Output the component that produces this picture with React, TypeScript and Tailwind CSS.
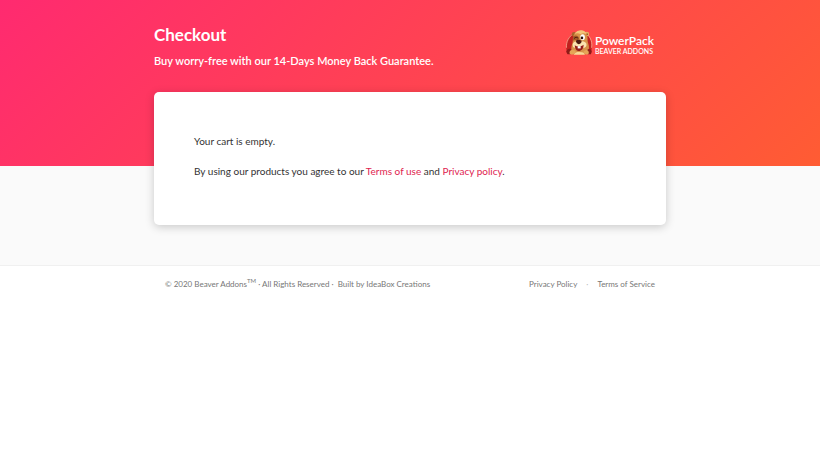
const footerLinks = [
  { label: "Privacy Policy", href: "#privacy" },
  { label: "Terms of Service", href: "#terms" },
];

function BeaverMark() {
  return (
    <svg viewBox="0 0 84 76" className="h-[25px] w-7 shrink-0" aria-hidden="true">
      <path d="M5 66 C-1 44 8 20 26 11 H62 C80 22 84 48 79 66 Z" fill="#c0211f" />
      <path d="M4 54 C2 38 11 19 26 11" fill="none" stroke="#ffc9a8" strokeWidth="2" />
      <path d="M66 12 C79 24 83 40 80 54" fill="none" stroke="#ffc9a8" strokeWidth="2" />
      <circle cx="27" cy="13" r="7" fill="#a8622b" />
      <circle cx="66" cy="12" r="7" fill="#e9ae62" />
      <circle cx="66" cy="13" r="3" fill="#8a4520" />
      <path d="M17 74 C20 62 17 52 21 43 C25 36 22 26 25 18 C30 6 39 2 48 2 C61 3 69 13 68 27 C67 38 74 45 72 56 C70 65 67 68 68 74 Z" fill="#d8924a" />
      <path d="M28 12 C34 3 43 0 51 1 C58 2 63 7 66 13 C58 9 52 9 47 13 C40 8 34 9 28 12 Z" fill="#f3c57a" />
      <path d="M24 20 C30 14 38 16 42 23 L39 32 C33 30 28 30 24 33 Z" fill="#a35a26" />
      <path d="M27 26 C31 21 36 21 40 26" fill="none" stroke="#4a1a12" strokeWidth="3" />
      <ellipse cx="53" cy="22" rx="7" ry="9" fill="#fff" />
      <circle cx="51" cy="24" r="4" fill="#2b1410" />
      <path d="M23 43 C25 34 33 33 40 37 C50 31 65 34 65 45 C65 54 56 56 50 53 C47 60 37 60 34 53 C27 56 22 52 23 43 Z" fill="#fbe3b0" />
      <path d="M32 33 C36 28 47 28 50 34 C49 41 44 43 41 43 C37 43 33 39 32 33 Z" fill="#4a1a12" />
      <path d="M29 46 C36 51 48 51 56 45 C56 58 48 65 40 64 C33 63 30 56 29 46 Z" fill="#951c19" />
      <path d="M38 49 H47 V56 H38 Z" fill="#fff" />
      <path d="M26 75 C28 68 36 67 43 67 C53 67 58 69 60 75 Z" fill="#f7d896" />
      <path d="M3 66 C6 54 17 55 20 62 C22 68 20 72 16 74 H7 Z" fill="#8f1a18" />
      <path d="M81 66 C79 55 70 56 66 62 C64 69 66 73 70 74 H78 Z" fill="#8f1a18" />
      <path d="M13 67 C17 57 28 58 32 66 C32 73 22 76 14 73 Z" fill="#e5a557" />
      <path d="M72 67 C68 57 59 60 56 67 C57 73 65 76 71 73 Z" fill="#e5a557" />
    </svg>
  );
}

function Logo() {
  return (
    <a href="#home" className="flex items-center gap-0.5 text-white">
      <BeaverMark />
      <span className="flex flex-col pt-1">
        <span className="text-[12px] leading-3 font-semibold">PowerPack</span>
        <span className="text-[7px] leading-2 font-semibold">BEAVER ADDONS</span>
      </span>
    </a>
  );
}

export default function App() {
  return (
    <div className="min-h-screen bg-white font-[Lato,'Liberation_Sans',sans-serif]">
      <div className="border-b border-[#f0f0f0] bg-[#fafafa] pb-10">
        <header className="bg-linear-[135deg] from-[#ff2a70] to-[#ff5c33] pt-5 pb-[94px]">
          <div className="mx-auto flex max-w-lg items-start justify-between">
            <div className="text-white">
              <h1 className="text-[17px] leading-[30px] font-bold">Checkout</h1>
              <p className="text-[11px] leading-[22px] font-semibold">
                Buy worry-free with our 14-Days Money Back Guarantee.
              </p>
            </div>
            <div className="pt-[10px] pr-3">
              <Logo />
            </div>
          </div>
        </header>

        <main className="relative mx-auto -mt-[74px] max-w-lg rounded-[5px] bg-white px-10 pt-10 pb-[45px] text-[10px] leading-[18px] text-[#333] shadow-[0_2px_10px_rgba(0,0,0,0.2)]">
          <p>Your cart is empty.</p>
          <p className="mt-3">
            By using our products you agree to our{" "}
            <a href="#terms" className="text-[#e0244f]">Terms of use</a> and{" "}
            <a href="#privacy" className="text-[#e0244f]">Privacy policy</a>.
          </p>
        </main>
      </div>

      <footer className="mx-auto flex max-w-lg items-center justify-between px-[11px] py-3 text-[8px] leading-3 text-[#777]">
        <p>
          © 2020 Beaver Addons<sup className="-top-1">TM</sup> · All Rights Reserved ·&nbsp; Built by{" "}
          <a href="#ideabox">IdeaBox Creations</a>
        </p>
        <nav className="flex items-center gap-[9px]">
          {footerLinks.map((link, i) => (
            <span key={link.label} className="flex items-center gap-[9px]">
              {i > 0 && <span className="text-[#bbb]">·</span>}
              <a href={link.href}>{link.label}</a>
            </span>
          ))}
        </nav>
      </footer>
    </div>
  );
}
